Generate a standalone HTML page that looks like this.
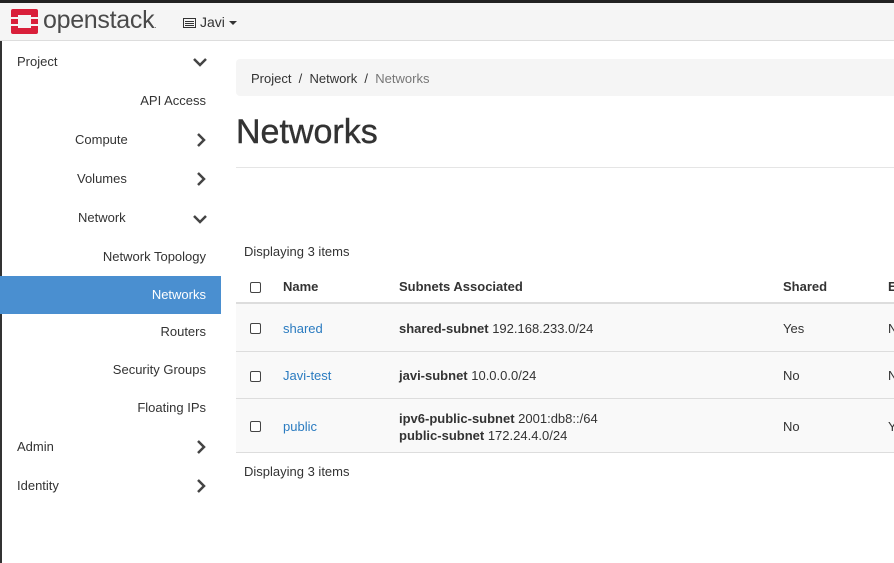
<!DOCTYPE html>
<html><head><style>
*{margin:0;padding:0;box-sizing:border-box}
body{width:894px;height:563px;overflow:hidden;background:#fff;font-family:"Liberation Sans",sans-serif;font-size:13px;color:#333;position:relative}
.top{position:absolute;left:0;top:0;width:894px;height:3px;background:#222}
.hdr{position:absolute;left:0;top:3px;width:894px;height:38px;background:#f5f5f5;border-bottom:1px solid #ddd}
.side{position:absolute;left:0;top:41px;width:221px;height:522px;border-left:2px solid #333}
.it{position:absolute;left:0;width:221px;height:38px;line-height:38px;font-size:13px}
.it.r{text-align:right;padding-right:17px}
.it.l{padding-left:15px}
.chev{position:absolute;right:16px;top:0}
.act{background:#4a8fd0;color:#fff}
a{color:#2a7bc0;text-decoration:none}
.bc{position:absolute;left:236px;top:59px;width:658px;height:37px;background:#f5f5f5;border-radius:4px 0 0 4px;padding:12px 15px;font-size:13px}
.bc span{color:#777}
h1{position:absolute;left:236px;top:113px;font-size:34px;font-weight:normal;color:#333;-webkit-text-stroke:0.4px #333}
.hr{position:absolute;left:236px;top:167px;width:658px;height:1px;background:#e5e5e5}
.cb{position:absolute;width:11px;height:11px;border:1px solid #444;border-radius:2px;background:#fff}
.row{position:absolute;left:236px;width:658px;background:#f9f9f9;border-bottom:1px solid #ddd}
.t{position:absolute;font-size:13px}
b{font-weight:bold}
</style></head><body>
<div class="top"></div>
<div class="hdr">
<svg style="position:absolute;left:11px;top:6px" width="27" height="25" viewBox="0 0 27 25"><rect x="0" y="0" width="27" height="25" rx="2" fill="#d91f3a"/><rect x="7" y="6" width="13" height="13" fill="#f5f5f5"/><rect x="0" y="8" width="7" height="2" fill="#f5f5f5"/><rect x="0" y="15" width="7" height="2" fill="#f5f5f5"/><rect x="20" y="8" width="7" height="2" fill="#f5f5f5"/><rect x="20" y="15" width="7" height="2" fill="#f5f5f5"/></svg>
<div style="position:absolute;left:43px;top:3px;font-size:25px;color:#4a4a4a;letter-spacing:-0.3px">openstack<span style="font-size:8px">.</span></div>
<svg style="position:absolute;left:183px;top:15px" width="13" height="10"><rect x="0.5" y="0.5" width="12" height="9" fill="none" stroke="#333"/><rect x="2" y="3" width="9" height="1" fill="#333"/><rect x="2" y="5" width="9" height="1" fill="#333"/><rect x="2" y="7" width="9" height="1" fill="#333"/></svg>
<div style="position:absolute;left:200px;top:11px;font-size:14px;color:#333">Javi</div>
<div style="position:absolute;left:229px;top:18px;border-left:4px solid transparent;border-right:4px solid transparent;border-top:4px solid #333"></div>
</div>
<svg width="0" height="0" style="position:absolute"><defs><path id="dn" d="M1 3l6 6 6-6" fill="none" stroke="#444" stroke-width="2.5"/><path id="rt" d="M3 1l6 6-6 6" fill="none" stroke="#444" stroke-width="2.5"/></defs></svg>
<div class="side">
<div class="it l" style="top:2px">Project<svg class="chev" style="top:13px" width="14" height="12"><use href="#dn"/></svg></div>
<div class="it r" style="top:41px">API Access</div>
<div class="it" style="top:80px;padding-left:73px">Compute<svg class="chev" style="top:12px" width="12" height="14"><use href="#rt"/></svg></div>
<div class="it" style="top:119px;padding-left:75px">Volumes<svg class="chev" style="top:12px" width="12" height="14"><use href="#rt"/></svg></div>
<div class="it" style="top:158px;padding-left:76px">Network<svg class="chev" style="top:14px" width="14" height="12"><use href="#dn"/></svg></div>
<div class="it r" style="top:197px">Network Topology</div>
<div class="it r act" style="top:235px;margin-left:-2px;width:221px;padding-right:15px">Networks</div>
<div class="it r" style="top:272px">Routers</div>
<div class="it r" style="top:310px">Security Groups</div>
<div class="it r" style="top:348px">Floating IPs</div>
<div class="it l" style="top:387px">Admin<svg class="chev" style="top:12px" width="12" height="14"><use href="#rt"/></svg></div>
<div class="it l" style="top:426px">Identity<svg class="chev" style="top:12px" width="12" height="14"><use href="#rt"/></svg></div>
</div>
<div class="bc">Project&nbsp; /&nbsp; Network&nbsp; /&nbsp; <span>Networks</span></div>
<h1>Networks</h1>
<div class="hr"></div>
<div class="t" style="left:244px;top:244px">Displaying 3 items</div>
<div style="position:absolute;left:236px;top:302px;width:658px;height:2px;background:#ddd"></div>
<div class="cb" style="left:250px;top:282px"></div>
<div class="t" style="left:283px;top:279px;font-weight:bold">Name</div>
<div class="t" style="left:399px;top:279px;font-weight:bold">Subnets Associated</div>
<div class="t" style="left:783px;top:279px;font-weight:bold">Shared</div>
<div class="t" style="left:888px;top:279px;font-weight:bold">E</div>
<div class="row" style="top:304px;height:48px"></div>
<div class="row" style="top:352px;height:47px"></div>
<div class="row" style="top:399px;height:54px"></div>
<div class="cb" style="left:250px;top:323px"></div>
<div class="t" style="left:283px;top:321px"><a>shared</a></div>
<div class="t" style="left:399px;top:321px"><b>shared-subnet</b> 192.168.233.0/24</div>
<div class="t" style="left:783px;top:321px">Yes</div>
<div class="t" style="left:888px;top:321px">N</div>
<div class="cb" style="left:250px;top:371px"></div>
<div class="t" style="left:283px;top:368px"><a>Javi-test</a></div>
<div class="t" style="left:399px;top:368px"><b>javi-subnet</b> 10.0.0.0/24</div>
<div class="t" style="left:783px;top:368px">No</div>
<div class="t" style="left:888px;top:368px">N</div>
<div class="cb" style="left:250px;top:421px"></div>
<div class="t" style="left:283px;top:419px"><a>public</a></div>
<div class="t" style="left:399px;top:410px;line-height:17px"><b>ipv6-public-subnet</b> 2001:db8::/64<br><b>public-subnet</b> 172.24.4.0/24</div>
<div class="t" style="left:783px;top:419px">No</div>
<div class="t" style="left:888px;top:419px">Y</div>
<div class="t" style="left:244px;top:464px">Displaying 3 items</div>
</body></html>
